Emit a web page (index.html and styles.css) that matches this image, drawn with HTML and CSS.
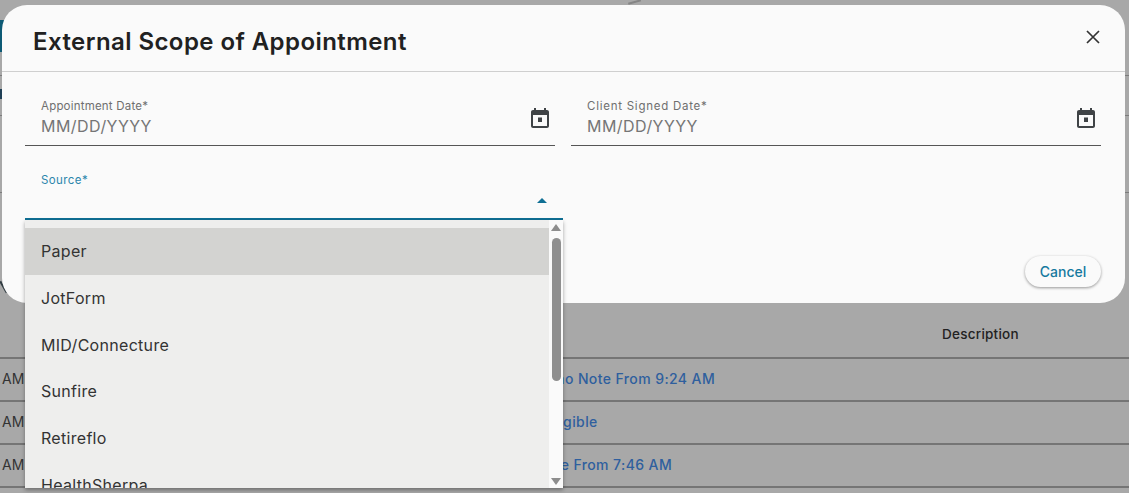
FILE: index.html
```html
<!DOCTYPE html>
<html lang="en">
<head>
<meta charset="utf-8">
<title>External Scope of Appointment</title>
<link rel="stylesheet" href="styles.css">
</head>
<body>
<main class="page">
  <div class="bg-line bg-line-a"></div>
  <div class="bg-line bg-line-b"></div>
  <div class="bg-line bg-line-c"></div>
  <div class="table-head"><span class="head-cell">Description</span></div>
  <div class="row"><span class="time">AM</span><a class="link">Converted To Memo Note From 9:24 AM</a></div>
  <div class="row"><span class="time">AM</span><a class="link">Marked As Now Eligible</a></div>
  <div class="row"><span class="time">AM</span><a class="link">Converted For Note From 7:46 AM</a></div>
</main>
<div class="side-tab"></div>
<div class="side-dot"></div>
<div class="bg-arc"></div>
<div class="bg-arc-low"></div>
<section class="modal">
  <header class="modal-head">
    <h1 class="modal-title">External Scope of Appointment</h1>
    <svg class="close" viewBox="0 0 14 14"><path d="M1 1l12 12M13 1L1 13"/></svg>
  </header>
  <div class="modal-body">
    <div class="date-row">
      <div class="field">
        <label class="field-label">Appointment Date*</label>
        <div class="field-value">MM/DD/YYYY</div>
        <svg class="cal" viewBox="0 0 18 20"><path fill-rule="evenodd" d="M3 0h2v2h8V0h2v2h1c1.100 0 2 .9 2 2v14c0 1.100-.9 2-2 2H2c-1.100 0-2-.9-2-2V4c0-1.100.9-2 2-2h1zM2 7v11h14V7zm5 2.500h4v4.500H7z"/></svg>
      </div>
      <div class="field">
        <label class="field-label field-label-wide">Client Signed Date*</label>
        <div class="field-value">MM/DD/YYYY</div>
        <svg class="cal" viewBox="0 0 18 20"><path fill-rule="evenodd" d="M3 0h2v2h8V0h2v2h1c1.100 0 2 .9 2 2v14c0 1.100-.9 2-2 2H2c-1.100 0-2-.9-2-2V4c0-1.100.9-2 2-2h1zM2 7v11h14V7zm5 2.500h4v4.500H7z"/></svg>
      </div>
    </div>
    <div class="source">
      <label class="source-label">Source*</label>
      <span class="source-arrow"></span>
    </div>
  </div>
  <footer class="modal-foot"><button class="cancel">Cancel</button></footer>
</section>
<div class="menu">
  <ul class="options">
    <li class="option option-active">Paper</li>
    <li class="option">JotForm</li>
    <li class="option">MID/Connecture</li>
    <li class="option">Sunfire</li>
    <li class="option">Retireflo</li>
    <li class="option">HealthSherpa</li>
  </ul>
  <div class="scrollbar">
    <span class="sb-up"></span>
    <span class="sb-thumb"></span>
    <span class="sb-down"></span>
  </div>
</div>
</body>
</html>
```
FILE: styles.css
```css
* { box-sizing: border-box; }
html, body { margin: 0; height: 100%; }
body {
  background: #a8a8a8;
  font-family: Inter, "Liberation Sans", sans-serif;
  overflow: hidden;
  position: relative;
  color: #222;
}
.page { padding-top: 315px; }
.bg-line { position: absolute; left: 0; right: 0; height: 1px; background: #7c7c7c; }
.bg-line-a { top: 75px; }
.bg-line-b { top: 115px; }
.bg-line-c { top: 192px; }
.table-head {
  height: 44px;
  border-bottom: 2px solid #757575;
  padding: 11px 0 0 942px;
  font-size: 13.5px;
  font-weight: 500;
  letter-spacing: .25px;
  color: #222;
}
.row {
  height: 43px;
  border-bottom: 2px solid #757575;
  display: flex;
  align-items: center;
  font-size: 14px;
  padding-left: 2px;
  padding-bottom: 2px;
}
.time { width: 429px; color: #333; }
.link { color: #2f5f9e; font-weight: 500; white-space: nowrap; letter-spacing: .4px; }
.side-tab {
  position: absolute; left: 0; top: 20px; width: 6px; height: 32px; background: #0d5a75;
}
.side-dot { position: absolute; left: 0; top: 89px; width: 2px; height: 10px; background: #1f3f55; }
.bg-arc {
  position: absolute; left: 628px; top: 1px; width: 13px; height: 1.5px;
  background: #858585; transform: rotate(-15deg);
}
.bg-arc-low {
  position: absolute; left: -3px; top: 286px; width: 13px; height: 2px;
  background: #2f3a40; transform: rotate(60deg);
}
.modal {
  position: absolute;
  left: 2px; top: 5px;
  width: 1123px; height: 298px;
  background: #fafafa;
  border-radius: 25px;
  display: flex;
  flex-direction: column;
}
.modal-head {
  height: 67px;
  border-bottom: 1px solid #cfcfcf;
  display: flex;
  align-items: center;
  justify-content: space-between;
  padding: 7px 25px 0 31px;
}
.modal-title { margin: 0; font-size: 24px; font-weight: 600; letter-spacing: .43px; color: #212121; }
.close { width: 14px; height: 14px; fill: none; stroke: #333; stroke-width: 1.7; margin-top: -10px; }
.modal-body { flex: 1; padding: 0 24px 0 23px; }
.date-row { display: flex; gap: 16px; padding-top: 27px; }
.field {
  flex: 1;
  position: relative;
  height: 47px;
  border-bottom: 1px solid #555;
  padding-left: 16px;
}
.field-label { display: block; font-size: 11.5px; line-height: 14px; letter-spacing: .2px; color: #6f6f6f; }
.field-label-wide { letter-spacing: .75px; }
.field-value { font-size: 16px; line-height: 20px; margin-top: 3px; color: #757575; letter-spacing: .45px; }
.cal { position: absolute; right: 6.500px; top: 9px; width: 18px; height: 20px; fill: #3f4346; }
.source {
  position: relative;
  width: 538px;
  height: 47px;
  margin-top: 27px;
  border-bottom: 2px solid #0f6f94;
  padding-left: 16px;
}
.source-label { display: block; font-size: 11.5px; line-height: 14px; letter-spacing: .4px; color: #2c86ac; }
.source-arrow {
  position: absolute; right: 16px; top: 25px;
  border-left: 5px solid transparent;
  border-right: 5px solid transparent;
  border-bottom: 5px solid #0f6f94;
}
.modal-foot { display: flex; justify-content: flex-end; padding: 0 24px 16px; }
.cancel {
  width: 76px; height: 31px;
  border: 0; border-radius: 16px;
  background: #fafafa;
  box-shadow: 0 1px 3px rgba(0,0,0,.4);
  color: #15799f;
  font: 500 14px Inter, "Liberation Sans", sans-serif;
}
.menu {
  position: absolute;
  left: 25px; top: 220px;
  width: 538px; height: 268px;
  background: #fafafa;
  box-shadow: 0 2px 4px rgba(0,0,0,.35);
  display: flex;
  overflow: hidden;
}
.options {
  list-style: none; margin: 0; padding: 8px 0 0;
  width: 524px;
  background: #eeeeed;
  overflow: hidden;
}
.option { height: 46.750px; line-height: 46.750px; padding-left: 16px; font-size: 16px; letter-spacing: .3px; color: #333; }
.option-active { background: #d3d3d1; }
.scrollbar {
  flex: 1;
  display: flex;
  flex-direction: column;
  align-items: center;
  position: relative;
  padding: 4px 0 3px;
}
.sb-up { border-left: 5px solid transparent; border-right: 5px solid transparent; border-bottom: 7px solid #8d8d8d; }
.sb-thumb { width: 9px; height: 143px; margin-top: 7px; border-radius: 5px; background: #8f8f8f; }
.sb-down { margin-top: auto; border-left: 5px solid transparent; border-right: 5px solid transparent; border-top: 7px solid #8d8d8d; }
```
